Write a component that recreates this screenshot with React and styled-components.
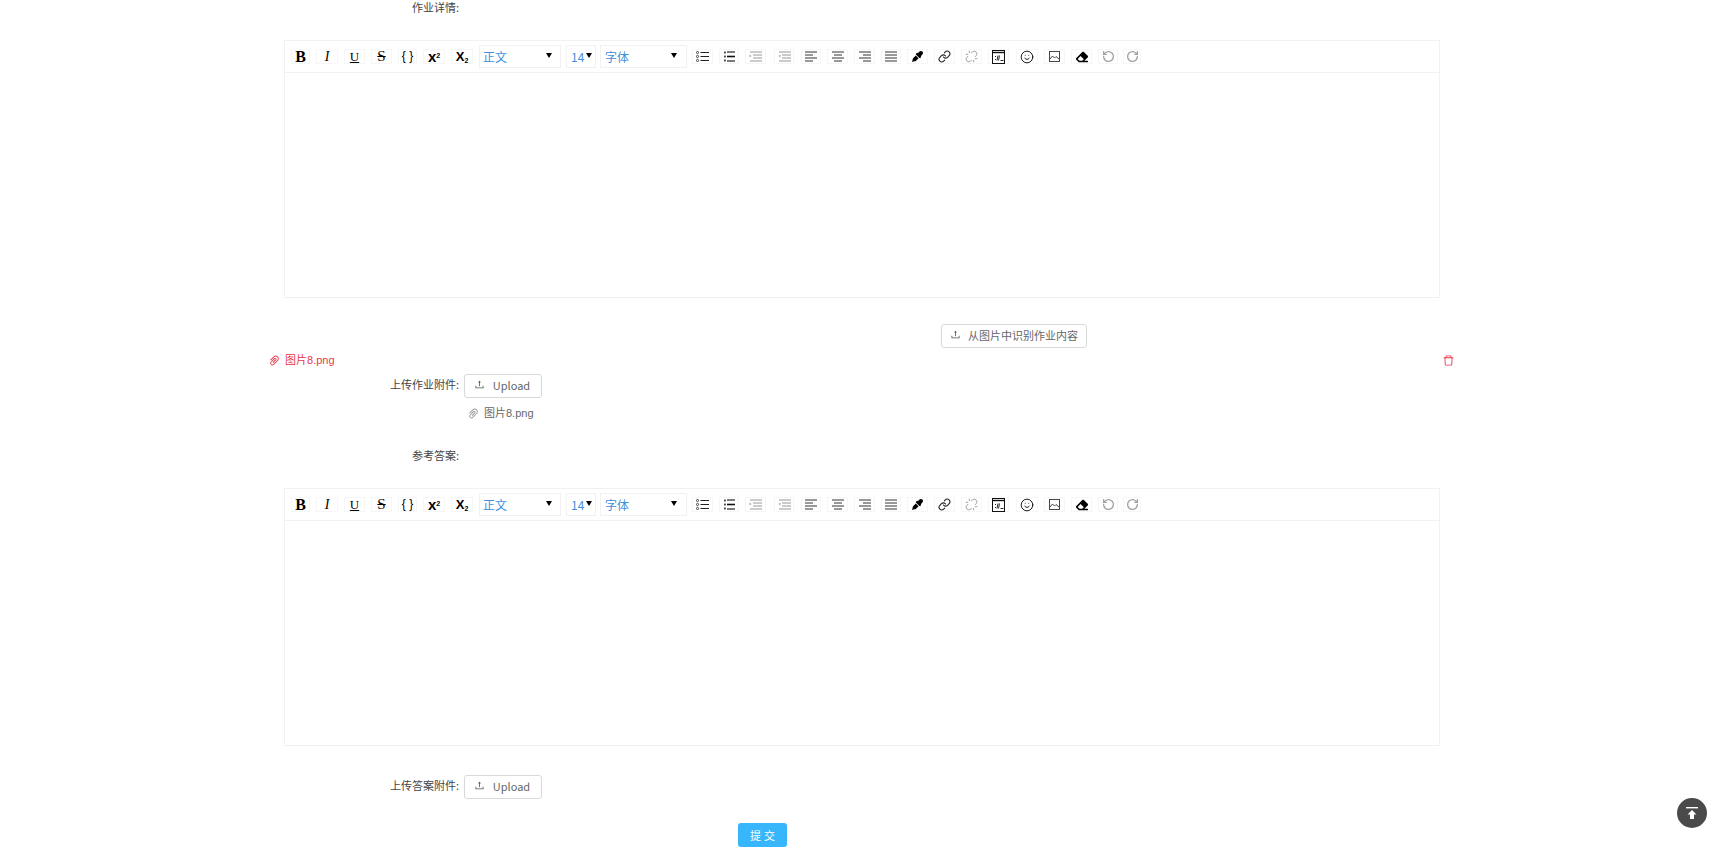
import React from 'react';
import styled, { createGlobalStyle } from 'styled-components';
import { AiOutlineUpload, AiOutlinePaperClip, AiOutlineDelete } from 'react-icons/ai';
import { FaEyeDropper, FaEraser } from 'react-icons/fa';
import { Link, Unlink, Smile, RotateCcw, RotateCw } from 'lucide-react';

const Global = createGlobalStyle`
  html, body { margin: 0; padding: 0; background: #fff; overflow: hidden; }
  body { font-family: "Noto Sans CJK SC", "Open Sans", sans-serif; font-size: 11px; color: #333; }
`;
const Page = styled.div`
  width: 1727px; height: 857px; display: flex; flex-direction: column; align-items: flex-start;
`;
const LabelRow = styled.div`
  width: 459px; height: 14px; margin-top: ${p => p.$top || 0}px; flex: none;
  display: flex; justify-content: flex-end; align-items: center;
  font-size: 11px; line-height: 14px; color: #444; white-space: nowrap;
`;
const Editor = styled.div`
  width: 1156px; height: 258px; margin: 26px 0 0 284px; flex: none; box-sizing: border-box;
  border: 1px solid #f1f1f1; display: flex; flex-direction: column;
`;
const Toolbar = styled.div`
  height: 32px; flex: none; box-sizing: border-box; border-bottom: 1px solid #f1f1f1;
  display: flex; align-items: center; padding: 0 0 0 6px;
`;
const Tool = styled.div`
  width: ${p => p.$w}px; height: 15px; margin-left: ${p => p.$gap}px; flex: none; box-sizing: border-box;
  border: 1px solid #f6f6f6; background: #fff; display: flex; align-items: center; justify-content: center;
  color: ${p => p.$off ? '#a0a0a0' : '#000'};
  font-size: ${p => p.$size || 13}px; line-height: 13px;
  font-family: ${p => p.$serif ? '"Liberation Serif", serif' : '"Liberation Sans", sans-serif'};
  font-weight: ${p => p.$bold ? 700 : 400};
  font-style: ${p => p.$italic ? 'italic' : 'normal'};
  text-decoration: ${p => p.$deco || 'none'};
  sup, sub { font-size: 7px; line-height: 0; }
  sup { vertical-align: 4px; }
  sub { vertical-align: -2px; }
`;
const Select = styled.div`
  width: ${p => p.$w}px; height: 23px; margin-left: ${p => p.$gap}px; flex: none; box-sizing: border-box;
  border: 1px solid #f1f1f1; display: flex; align-items: center; justify-content: space-between;
  padding: 0 ${p => p.$pr}px 0 ${p => p.$pl}px; color: #3f8fdc; font-size: 12px;
`;
const Caret = styled.span`
  width: 0; height: 0; flex: none; margin-bottom: 3px;
  border-left: 3.5px solid transparent; border-right: 3.5px solid transparent; border-top: 5px solid #000;
`;
const Area = styled.div` flex: 1; `;
const OutlineBtn = styled.div`
  width: ${p => p.$w}px; height: 24px; flex: none; box-sizing: border-box;
  border: 1px solid #d9d9d9; border-radius: 3px; background: #fff; color: #666;
  display: flex; align-items: center; justify-content: center; gap: ${p => p.$g}px;
  font-size: 11px; line-height: 20px; white-space: nowrap; padding: 0 ${p => p.$pr || 0}px 3px 0;
  svg { font-size: 11px; color: #555; }
`;
const RecognizeRow = styled.div` margin: 26px 0 0 941px; flex: none; `;
const AttachRow = styled.div`
  width: 1187px; height: 16px; margin: 4px 0 1px 268px; flex: none;
  display: flex; align-items: center; justify-content: space-between; color: #e8374a;
`;
const FileName = styled.span`
  display: flex; align-items: center; gap: 4px; font-size: 11px; line-height: 16px;
  font-family: "Liberation Sans", "Noto Sans CJK SC", sans-serif;
  color: ${p => p.$muted ? '#666' : '#e8374a'};
  svg { font-size: 13px; color: ${p => p.$muted ? '#999' : '#e8374a'}; }
`;
const UploadRow = styled.div`
  display: flex; align-items: center; gap: 5px; height: 24px; margin-top: ${p => p.$top}px; flex: none;
`;
const UploadLabel = styled.div`
  width: 459px; flex: none; text-align: right; font-size: 11px; line-height: 20px; color: #444; padding-bottom: 5px;
`;
const FileLine = styled.div` height: 16px; margin: 7px 0 0 467px; flex: none; `;
const Submit = styled.div`
  width: 49px; height: 24px; margin: 24px 0 0 738px; flex: none; border-radius: 3px;
  background: #38b6fb; color: #fff; font-size: 11px; letter-spacing: 3px; text-indent: 3px;
  display: flex; align-items: center; justify-content: center;
`;
const BackTop = styled.div`
  position: fixed; left: 1677px; top: 798px; width: 30px; height: 30px; border-radius: 50%;
  background: #4a4a4a; display: flex; align-items: center; justify-content: center;
`;

const Lines = ({ rows }) => (
  <svg width="14" height="11" viewBox="0 0 14 11" fill="none" stroke="#333" strokeWidth="1">
    {rows.map(([a, b, y], i) => <line key={i} x1={a} x2={b} y1={y} y2={y} />)}
  </svg>
);
const ListU = () => (
  <svg width="13" height="11" viewBox="0 0 13 11" fill="none" stroke="#222">
    {[1.5, 5.5, 9.5].map(y => <circle key={y} cx="1.5" cy={y} r="1.1" strokeWidth=".8" />)}
    {[1.5, 5.5, 9.5].map(y => <line key={y} x1="4.5" x2="13" y1={y} y2={y} />)}
  </svg>
);
const ListO = () => (
  <svg width="11" height="11" viewBox="0 0 11 11" fill="none" stroke="#111">
    {[1.5, 5.5, 9.5].map(y => <rect key={y} x=".5" y={y - .5} width="1" height="1" strokeWidth=".7" />)}
    <line x1="3" x2="11" y1="1" y2="1" strokeWidth="1.1" />
    <line x1="3" x2="11" y1="5.5" y2="5.5" strokeWidth="1.6" />
    <line x1="3" x2="11" y1="10" y2="10" strokeWidth="1.1" />
  </svg>
);
const Indent = ({ out }) => (
  <svg width="13" height="11" viewBox="0 0 13 11" fill="none" stroke="#a8a8a8" strokeWidth="1.2">
    <line x1="1" x2="13" y1="1" y2="1" />
    <line x1="4" x2="13" y1="4" y2="4" />
    <line x1="4" x2="13" y1="7" y2="7" />
    <line x1="1" x2="13" y1="10" y2="10" />
    <path d={out ? 'M2.5 3.5v3l-2-1.5z' : 'M0.5 3.5v3l2-1.5z'} fill="#a8a8a8" stroke="none" />
  </svg>
);
const Embedded = () => (
  <svg width="13" height="14" viewBox="0 0 13 14" fill="none" stroke="#111">
    <rect x=".5" y=".5" width="12" height="13" />
    <line x1="0" x2="13" y1="2.5" y2="2.5" strokeWidth="1.4" />
    <path d="M3.5 6v1M3.5 9v1M6 5.5l-1 5M7.5 5.5l-1 5M8.5 10.5h3" strokeWidth=".9" />
  </svg>
);
const Pic = () => (
  <svg width="11" height="11" viewBox="0 0 11 11" fill="none" stroke="#333" strokeWidth=".9">
    <rect x=".5" y=".5" width="10" height="10" />
    <path d="M1 8l2.5-3 2 2 1.5-1.5L10 8" />
  </svg>
);
const BackIcon = () => (
  <svg width="14" height="14" viewBox="0 0 14 14" fill="#fff">
    <rect x="1" y="1" width="12" height="1.4" />
    <path d="M7 4l4.5 4.5H9V13H5V8.5H2.5z" />
  </svg>
);

const tools1 = [
  { w: 19, gap: 0, c: 'B', serif: 1, bold: 1, size: 16 },
  { w: 22, gap: 6, c: 'I', serif: 1, italic: 1, size: 14 },
  { w: 21, gap: 6, c: 'U', serif: 1, deco: 'underline', size: 13 },
  { w: 21, gap: 6, c: 'S', serif: 1, deco: 'line-through', size: 15 },
  { w: 19, gap: 6, c: '{ }', size: 12 },
  { w: 22, gap: 6, c: <b>x<sup>2</sup></b>, size: 15 },
  { w: 22, gap: 6, c: <b>X<sub>2</sub></b>, size: 13 },
];
const tools2 = [
  { w: 21, gap: 5, c: <ListU /> },
  { w: 20, gap: 6, c: <ListO /> },
  { w: 21, gap: 6, c: <Indent /> },
  { w: 20, gap: 8, c: <Indent out /> },
  { w: 20, gap: 7, c: <Lines rows={[[1, 13, 1], [1, 9, 4], [1, 13, 7], [1, 9, 10]]} /> },
  { w: 21, gap: 6, c: <Lines rows={[[1, 13, 1], [3, 11, 4], [1, 13, 7], [3, 11, 10]]} /> },
  { w: 21, gap: 6, c: <Lines rows={[[1, 13, 1], [5, 13, 4], [1, 13, 7], [5, 13, 10]]} /> },
  { w: 20, gap: 6, c: <Lines rows={[[1, 13, 1], [1, 13, 4], [1, 13, 7], [1, 13, 10]]} /> },
  { w: 21, gap: 6, c: <FaEyeDropper size={11} /> },
  { w: 21, gap: 6, c: <Link size={13} strokeWidth={2} color="#222" /> },
  { w: 21, gap: 6, off: 1, c: <Unlink size={13} strokeWidth={1.8} /> },
  { w: 21, gap: 6, c: <Embedded /> },
  { w: 22, gap: 7, c: <Smile size={14} strokeWidth={1.5} /> },
  { w: 21, gap: 6, c: <Pic /> },
  { w: 21, gap: 6, c: <FaEraser size={12} /> },
  { w: 20, gap: 6, off: 1, c: <RotateCcw size={13} strokeWidth={2.4} /> },
  { w: 18, gap: 5, off: 1, c: <RotateCw size={13} strokeWidth={2.4} /> },
];

const renderTool = (t, i) => (
  <Tool key={i} $w={t.w} $gap={t.gap} $size={t.size} $serif={t.serif} $bold={t.bold}
    $italic={t.italic} $deco={t.deco} $off={t.off}>{t.c}</Tool>
);

const RichEditor = () => (
  <Editor>
    <Toolbar>
      {tools1.map(renderTool)}
      <Select $w={82} $gap={6} $pl={3} $pr={8}>正文<Caret /></Select>
      <Select $w={30} $gap={5} $pl={4} $pr={3}>14<Caret /></Select>
      <Select $w={87} $gap={4} $pl={4} $pr={9}>字体<Caret /></Select>
      {tools2.map(renderTool)}
    </Toolbar>
    <Area />
  </Editor>
);

const UploadBtn = () => (
  <OutlineBtn $w={78} $g={8} $pr={2}><AiOutlineUpload />Upload</OutlineBtn>
);

export default function App() {
  return (
    <Page>
      <Global />
      <LabelRow>作业详情:</LabelRow>
      <RichEditor />
      <RecognizeRow>
        <OutlineBtn $w={146} $g={7}><AiOutlineUpload />从图片中识别作业内容</OutlineBtn>
      </RecognizeRow>
      <AttachRow>
        <FileName><AiOutlinePaperClip />图片8.png</FileName>
        <AiOutlineDelete size={13} />
      </AttachRow>
      <UploadRow $top={5}>
        <UploadLabel>上传作业附件:</UploadLabel>
        <UploadBtn />
      </UploadRow>
      <FileLine>
        <FileName $muted><AiOutlinePaperClip />图片8.png</FileName>
      </FileLine>
      <LabelRow $top={27}>参考答案:</LabelRow>
      <RichEditor />
      <UploadRow $top={29}>
        <UploadLabel>上传答案附件:</UploadLabel>
        <UploadBtn />
      </UploadRow>
      <Submit>提交</Submit>
      <BackTop><BackIcon /></BackTop>
    </Page>
  );
}
